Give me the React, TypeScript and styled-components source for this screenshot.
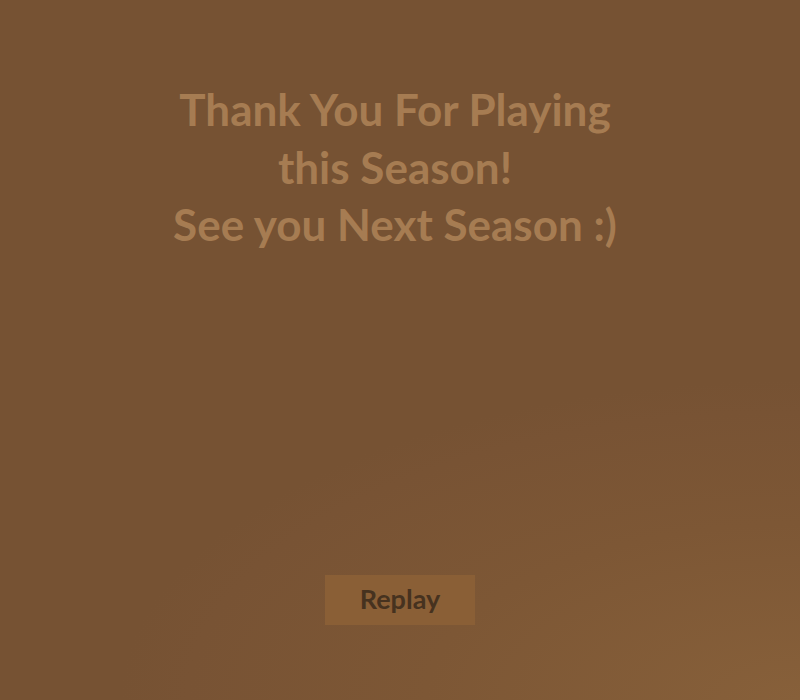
import React from "react";
import styled, { createGlobalStyle } from "styled-components";

const Global = createGlobalStyle`
  html, body { margin: 0; padding: 0; }
  body { width: 800px; height: 700px; overflow: hidden; }
`;

const Screen = styled.div`
  width: 800px;
  height: 700px;
  box-sizing: border-box;
  background: radial-gradient(ellipse 680px 320px at 100% 100%, #87603a 0%, #7d5735 55%, #785334 90%, #765233 100%), #765233;
  display: flex;
  flex-direction: column;
  align-items: center;
  padding-top: 81px;
  font-family: Lato, "Open Sans", sans-serif;
`;

const Message = styled.h1`
  margin: 0;
  text-align: center;
  color: #a67c52;
  font-size: 44px;
  font-weight: 700;
  line-height: 57.5px;
  margin-left: -10px;
`;

const ReplayButton = styled.button`
  margin-top: 321px;
  width: 150px;
  height: 50px;
  padding: 0 0 3px;
  border: none;
  background: #8a5f36;
  color: #46321f;
  font-family: inherit;
  font-size: 27px;
  font-weight: 700;
  cursor: pointer;
`;

export default function App() {
  return (
    <>
      <Global />
      <Screen>
        <Message>
          Thank You For Playing
          <br />
          this Season!
          <br />
          See you Next Season :)
        </Message>
        <ReplayButton>Replay</ReplayButton>
      </Screen>
    </>
  );
}
